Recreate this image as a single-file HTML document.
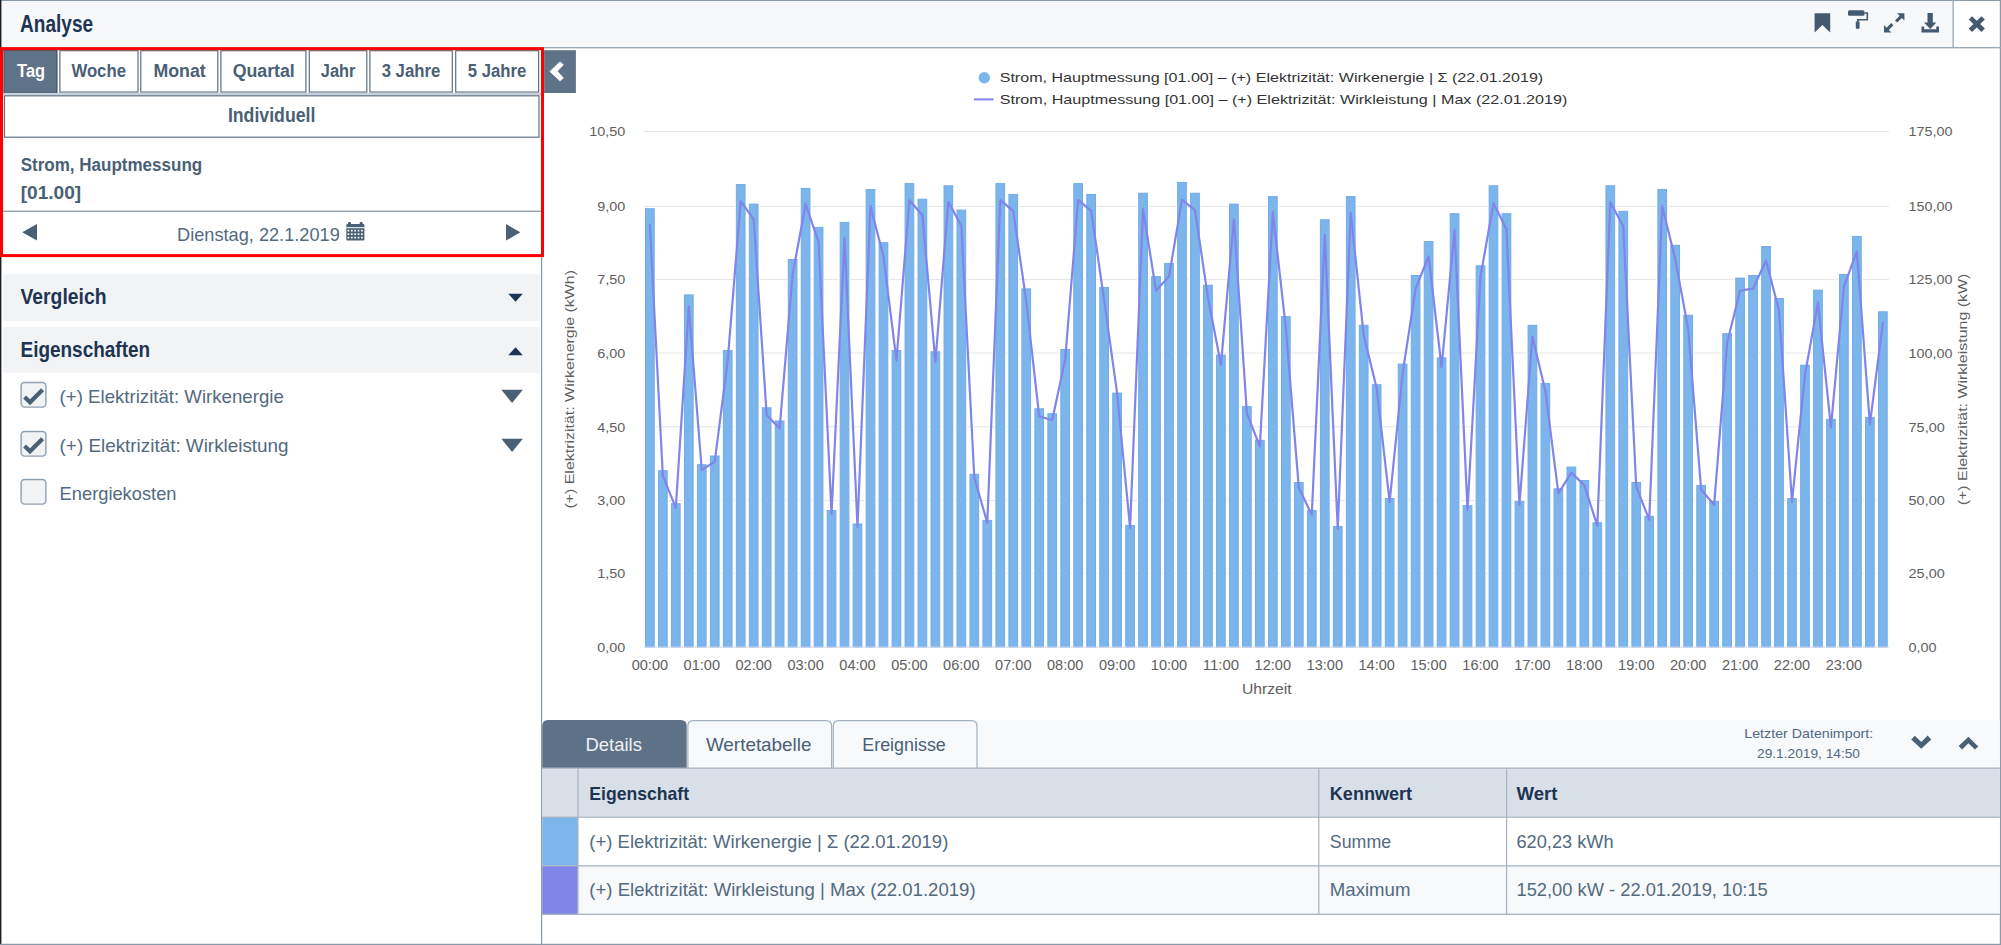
<!DOCTYPE html>
<html><head><meta charset="utf-8"><title>Analyse</title>
<style>html,body{margin:0;padding:0;width:2001px;height:945px;overflow:hidden;background:#fff}
svg{display:block;font-family:"Liberation Sans", sans-serif}</style></head>
<body><svg width="2001" height="945" viewBox="0 0 2001 945">
<rect x="0" y="0" width="2001" height="945" fill="#ffffff"/>
<rect x="1" y="1" width="1952" height="46" fill="#f7f8fa"/>
<rect x="0" y="0" width="2001" height="1" fill="#8a9aaa"/>
<rect x="0" y="47" width="2001" height="1.2" fill="#9aa8b6"/>
<rect x="1952.5" y="0" width="1.3" height="47" fill="#9aa8b6"/>
<text x="20.1" y="31.5" font-size="23.3" font-weight="bold" fill="#1d3553" text-anchor="start" textLength="73.0" lengthAdjust="spacingAndGlyphs">Analyse</text>
<path d="M1814.6 13.2 H1830.2 V32.5 L1822.4 25 L1814.6 32.5 Z" fill="#435a70"/>
<rect x="1848" y="10.3" width="16.5" height="5.5" rx="1.5" fill="#435a70"/>
<path d="M1864.5 13 H1867.3 V19.8 H1857.8 V22" fill="none" stroke="#435a70" stroke-width="1.6"/>
<rect x="1855.8" y="21.5" width="3.8" height="7.2" rx="0.8" fill="#435a70"/>
<path d="M1897 13.2 H1904.4 V20.6 L1901.8 18 L1897.2 22.6 L1895 20.4 L1899.6 15.8 Z" fill="#435a70"/>
<path d="M1884 32.5 V25.1 L1886.6 27.7 L1891.2 23.1 L1893.4 25.3 L1888.8 29.9 L1891.4 32.5 Z" fill="#435a70"/>
<path d="M1927.5 13.1 H1932.8 V22.5 H1936.4 L1930.2 28.9 L1924 22.5 H1927.5 Z" fill="#435a70"/>
<path d="M1921.5 26.6 H1924.2 V29.3 H1936.3 V26.6 H1939 V32.4 H1921.5 Z" fill="#435a70"/>
<path d="M1970.4 17.9 L1983.2 30.3 M1983.2 17.9 L1970.4 30.3" stroke="#435a70" stroke-width="4.8"/>
<rect x="3.9" y="50.2" width="53.1" height="42.4" fill="#5f7388" stroke="#2e4760" stroke-width="1"/>
<text x="17.1" y="77.4" font-size="18.8" font-weight="bold" fill="#ffffff" text-anchor="start" textLength="27.9" lengthAdjust="spacingAndGlyphs">Tag</text>
<rect x="59.9" y="50.7" width="78.1" height="41.4" fill="#ffffff" stroke="#5d7185" stroke-width="1.2"/>
<text x="71.4" y="77.4" font-size="18.8" font-weight="bold" fill="#4a6075" text-anchor="start" textLength="54.6" lengthAdjust="spacingAndGlyphs">Woche</text>
<rect x="140.8" y="50.7" width="77.0" height="41.4" fill="#ffffff" stroke="#5d7185" stroke-width="1.2"/>
<text x="153.5" y="77.4" font-size="18.8" font-weight="bold" fill="#4a6075" text-anchor="start" textLength="52.2" lengthAdjust="spacingAndGlyphs">Monat</text>
<rect x="220.9" y="50.7" width="85.0" height="41.4" fill="#ffffff" stroke="#5d7185" stroke-width="1.2"/>
<text x="232.7" y="77.4" font-size="18.8" font-weight="bold" fill="#4a6075" text-anchor="start" textLength="62.1" lengthAdjust="spacingAndGlyphs">Quartal</text>
<rect x="309.3" y="50.7" width="57.5" height="41.4" fill="#ffffff" stroke="#5d7185" stroke-width="1.2"/>
<text x="320.8" y="77.4" font-size="18.8" font-weight="bold" fill="#4a6075" text-anchor="start" textLength="34.5" lengthAdjust="spacingAndGlyphs">Jahr</text>
<rect x="369.9" y="50.7" width="82.4" height="41.4" fill="#ffffff" stroke="#5d7185" stroke-width="1.2"/>
<text x="381.7" y="77.4" font-size="18.8" font-weight="bold" fill="#4a6075" text-anchor="start" textLength="58.5" lengthAdjust="spacingAndGlyphs">3 Jahre</text>
<rect x="455.7" y="50.7" width="82.9" height="41.4" fill="#ffffff" stroke="#5d7185" stroke-width="1.2"/>
<text x="467.8" y="77.4" font-size="18.8" font-weight="bold" fill="#4a6075" text-anchor="start" textLength="58.4" lengthAdjust="spacingAndGlyphs">5 Jahre</text>
<rect x="3" y="92.8" width="538" height="2.4" fill="#c9d1da"/>
<rect x="4.5" y="95.8" width="534.5" height="41.4" fill="#ffffff" stroke="#5d7185" stroke-width="1.2"/>
<text x="227.9" y="122.3" font-size="19.5" font-weight="bold" fill="#4a6075" text-anchor="start" textLength="87.5" lengthAdjust="spacingAndGlyphs">Individuell</text>
<text x="20.7" y="170.7" font-size="18.3" font-weight="bold" fill="#4a6075" text-anchor="start" textLength="181.5" lengthAdjust="spacingAndGlyphs">Strom, Hauptmessung</text>
<text x="20.7" y="199.2" font-size="18.3" font-weight="bold" fill="#4a6075" text-anchor="start" textLength="60.5" lengthAdjust="spacingAndGlyphs">[01.00]</text>
<rect x="3" y="210.6" width="538" height="1.3" fill="#8a9bab"/>
<path d="M22.2 232.2 L37 224 V240.4 Z" fill="#4a6075"/>
<path d="M506 224 L520.3 232.3 L506 240.6 Z" fill="#4a6075"/>
<text x="177.0" y="240.8" font-size="19" fill="#536a80" text-anchor="start" textLength="162.8" lengthAdjust="spacingAndGlyphs">Dienstag, 22.1.2019</text>
<rect x="346.3" y="224" width="18.1" height="16.6" rx="1" fill="#4a6075"/><rect x="348" y="221.9" width="3" height="3" rx="1" fill="#4a6075"/><rect x="359.7" y="221.9" width="3" height="3" rx="1" fill="#4a6075"/><rect x="346.3" y="227.2" width="18.1" height="1" fill="#ffffff"/><rect x="347.60" y="229.80" width="1.7" height="1.7" fill="#ffffff"/><rect x="350.95" y="229.80" width="1.7" height="1.7" fill="#ffffff"/><rect x="354.30" y="229.80" width="1.7" height="1.7" fill="#ffffff"/><rect x="357.65" y="229.80" width="1.7" height="1.7" fill="#ffffff"/><rect x="361.00" y="229.80" width="1.7" height="1.7" fill="#ffffff"/><rect x="347.60" y="233.30" width="1.7" height="1.7" fill="#ffffff"/><rect x="350.95" y="233.30" width="1.7" height="1.7" fill="#ffffff"/><rect x="354.30" y="233.30" width="1.7" height="1.7" fill="#ffffff"/><rect x="357.65" y="233.30" width="1.7" height="1.7" fill="#ffffff"/><rect x="361.00" y="233.30" width="1.7" height="1.7" fill="#ffffff"/><rect x="347.60" y="236.80" width="1.7" height="1.7" fill="#ffffff"/><rect x="350.95" y="236.80" width="1.7" height="1.7" fill="#ffffff"/><rect x="354.30" y="236.80" width="1.7" height="1.7" fill="#ffffff"/><rect x="357.65" y="236.80" width="1.7" height="1.7" fill="#ffffff"/><rect x="361.00" y="236.80" width="1.7" height="1.7" fill="#ffffff"/>
<rect x="0" y="0" width="1.4" height="945" fill="#1a1f24"/>
<rect x="1999.8" y="0" width="1.2" height="945" fill="#8a9aaa"/>
<rect x="0" y="943.8" width="2001" height="1.2" fill="#8a9aaa"/>
<rect x="1.5" y="48.7" width="541" height="206.9" fill="none" stroke="#ff0000" stroke-width="3"/>
<rect x="3.3" y="274.2" width="537.2" height="46.5" fill="#f1f3f5"/>
<text x="20.5" y="304.0" font-size="21.5" font-weight="bold" fill="#1d3553" text-anchor="start" textLength="86.0" lengthAdjust="spacingAndGlyphs">Vergleich</text>
<path d="M508.3 293.8 H522.8 L515.55 301.7 Z" fill="#1d3553"/>
<rect x="3.3" y="327.1" width="537.2" height="45.6" fill="#f1f3f5"/>
<text x="20.5" y="357.1" font-size="21.5" font-weight="bold" fill="#1d3553" text-anchor="start" textLength="129.6" lengthAdjust="spacingAndGlyphs">Eigenschaften</text>
<path d="M508.3 355.2 H522.8 L515.55 347.2 Z" fill="#1d3553"/>
<rect x="21.1" y="382.5" width="24.8" height="24.6" rx="3.5" fill="#f1f3f5" stroke="#8fa0b1" stroke-width="1.4"/>
<path d="M24.6 397.0 L30 402.2 L42.6 389.7" fill="none" stroke="#4a6075" stroke-width="4.2"/>
<path d="M501.4 389.8 H522.8 L512.1 403.0 Z" fill="#4a6075"/>
<text x="59.6" y="403.4" font-size="19" fill="#536a80" text-anchor="start" textLength="224.2" lengthAdjust="spacingAndGlyphs">(+) Elektrizität: Wirkenergie</text>
<rect x="21.1" y="431.5" width="24.8" height="24.6" rx="3.5" fill="#f1f3f5" stroke="#8fa0b1" stroke-width="1.4"/>
<path d="M24.6 446.0 L30 451.2 L42.6 438.7" fill="none" stroke="#4a6075" stroke-width="4.2"/>
<path d="M501.4 438.8 H522.8 L512.1 452.0 Z" fill="#4a6075"/>
<text x="59.6" y="452.4" font-size="19" fill="#536a80" text-anchor="start" textLength="229.0" lengthAdjust="spacingAndGlyphs">(+) Elektrizität: Wirkleistung</text>
<rect x="21.1" y="479.5" width="24.8" height="24.6" rx="3.5" fill="#f1f3f5" stroke="#8fa0b1" stroke-width="1.4"/>
<text x="59.6" y="500.4" font-size="19" fill="#536a80" text-anchor="start" textLength="116.9" lengthAdjust="spacingAndGlyphs">Energiekosten</text>
<rect x="541" y="257" width="1.2" height="688" fill="#8a9bab"/>
<rect x="544" y="47" width="1457" height="1.2" fill="#9aa8b6"/>
<rect x="544.1" y="50.2" width="31.8" height="42.8" fill="#5f7388"/>
<path d="M549.5 71.5 L560 61.4 L563.8 64.8 L557.6 71.3 L563.8 77.9 L560 81.2 Z" fill="#ffffff"/>
<text x="597.3" y="651.7" font-size="13.6" fill="#606060" text-anchor="start" textLength="28.0" lengthAdjust="spacingAndGlyphs">0,00</text>
<text x="1908.6" y="651.7" font-size="13.6" fill="#606060" text-anchor="start" textLength="28.0" lengthAdjust="spacingAndGlyphs">0,00</text>
<rect x="644" y="573.0" width="1245" height="1" fill="#e6e6e6"/>
<text x="597.3" y="578.2" font-size="13.6" fill="#606060" text-anchor="start" textLength="28.0" lengthAdjust="spacingAndGlyphs">1,50</text>
<text x="1908.6" y="578.2" font-size="13.6" fill="#606060" text-anchor="start" textLength="36.1" lengthAdjust="spacingAndGlyphs">25,00</text>
<rect x="644" y="500.0" width="1245" height="1" fill="#e6e6e6"/>
<text x="597.3" y="505.2" font-size="13.6" fill="#606060" text-anchor="start" textLength="28.0" lengthAdjust="spacingAndGlyphs">3,00</text>
<text x="1908.6" y="505.2" font-size="13.6" fill="#606060" text-anchor="start" textLength="36.1" lengthAdjust="spacingAndGlyphs">50,00</text>
<rect x="644" y="426.3" width="1245" height="1" fill="#e6e6e6"/>
<text x="597.3" y="431.5" font-size="13.6" fill="#606060" text-anchor="start" textLength="28.0" lengthAdjust="spacingAndGlyphs">4,50</text>
<text x="1908.6" y="431.5" font-size="13.6" fill="#606060" text-anchor="start" textLength="36.1" lengthAdjust="spacingAndGlyphs">75,00</text>
<rect x="644" y="352.5" width="1245" height="1" fill="#e6e6e6"/>
<text x="597.3" y="357.7" font-size="13.6" fill="#606060" text-anchor="start" textLength="28.0" lengthAdjust="spacingAndGlyphs">6,00</text>
<text x="1908.6" y="357.7" font-size="13.6" fill="#606060" text-anchor="start" textLength="43.8" lengthAdjust="spacingAndGlyphs">100,00</text>
<rect x="644" y="278.9" width="1245" height="1" fill="#e6e6e6"/>
<text x="597.3" y="284.1" font-size="13.6" fill="#606060" text-anchor="start" textLength="28.0" lengthAdjust="spacingAndGlyphs">7,50</text>
<text x="1908.6" y="284.1" font-size="13.6" fill="#606060" text-anchor="start" textLength="43.8" lengthAdjust="spacingAndGlyphs">125,00</text>
<rect x="644" y="206.0" width="1245" height="1" fill="#e6e6e6"/>
<text x="597.3" y="211.2" font-size="13.6" fill="#606060" text-anchor="start" textLength="28.0" lengthAdjust="spacingAndGlyphs">9,00</text>
<text x="1908.6" y="211.2" font-size="13.6" fill="#606060" text-anchor="start" textLength="43.8" lengthAdjust="spacingAndGlyphs">150,00</text>
<rect x="644" y="131.0" width="1245" height="1" fill="#e6e6e6"/>
<text x="589.2" y="136.2" font-size="13.6" fill="#606060" text-anchor="start" textLength="36.1" lengthAdjust="spacingAndGlyphs">10,50</text>
<text x="1908.6" y="136.2" font-size="13.6" fill="#606060" text-anchor="start" textLength="43.8" lengthAdjust="spacingAndGlyphs">175,00</text>
<rect x="644.00" y="207.2" width="11.7" height="439.8" fill="#ffffff"/>
<rect x="645.50" y="208.7" width="8.7" height="438.3" fill="#7cb5ec" stroke="#71ace7" stroke-width="1"/>
<rect x="656.98" y="469.2" width="11.7" height="177.8" fill="#ffffff"/>
<rect x="658.48" y="470.7" width="8.7" height="176.3" fill="#7cb5ec" stroke="#71ace7" stroke-width="1"/>
<rect x="669.96" y="502.2" width="11.7" height="144.8" fill="#ffffff"/>
<rect x="671.46" y="503.7" width="8.7" height="143.3" fill="#7cb5ec" stroke="#71ace7" stroke-width="1"/>
<rect x="682.94" y="293.4" width="11.7" height="353.6" fill="#ffffff"/>
<rect x="684.44" y="294.9" width="8.7" height="352.1" fill="#7cb5ec" stroke="#71ace7" stroke-width="1"/>
<rect x="695.92" y="463.2" width="11.7" height="183.8" fill="#ffffff"/>
<rect x="697.42" y="464.7" width="8.7" height="182.3" fill="#7cb5ec" stroke="#71ace7" stroke-width="1"/>
<rect x="708.89" y="454.5" width="11.7" height="192.5" fill="#ffffff"/>
<rect x="710.39" y="456.0" width="8.7" height="191.0" fill="#7cb5ec" stroke="#71ace7" stroke-width="1"/>
<rect x="721.87" y="349.0" width="11.7" height="298.0" fill="#ffffff"/>
<rect x="723.37" y="350.5" width="8.7" height="296.5" fill="#7cb5ec" stroke="#71ace7" stroke-width="1"/>
<rect x="734.85" y="183.1" width="11.7" height="463.9" fill="#ffffff"/>
<rect x="736.35" y="184.6" width="8.7" height="462.4" fill="#7cb5ec" stroke="#71ace7" stroke-width="1"/>
<rect x="747.83" y="202.6" width="11.7" height="444.4" fill="#ffffff"/>
<rect x="749.33" y="204.1" width="8.7" height="442.9" fill="#7cb5ec" stroke="#71ace7" stroke-width="1"/>
<rect x="760.81" y="406.3" width="11.7" height="240.7" fill="#ffffff"/>
<rect x="762.31" y="407.8" width="8.7" height="239.2" fill="#7cb5ec" stroke="#71ace7" stroke-width="1"/>
<rect x="773.79" y="419.5" width="11.7" height="227.5" fill="#ffffff"/>
<rect x="775.29" y="421.0" width="8.7" height="226.0" fill="#7cb5ec" stroke="#71ace7" stroke-width="1"/>
<rect x="786.77" y="258.0" width="11.7" height="389.0" fill="#ffffff"/>
<rect x="788.27" y="259.5" width="8.7" height="387.5" fill="#7cb5ec" stroke="#71ace7" stroke-width="1"/>
<rect x="799.75" y="186.9" width="11.7" height="460.1" fill="#ffffff"/>
<rect x="801.25" y="188.4" width="8.7" height="458.6" fill="#7cb5ec" stroke="#71ace7" stroke-width="1"/>
<rect x="812.73" y="225.9" width="11.7" height="421.1" fill="#ffffff"/>
<rect x="814.23" y="227.4" width="8.7" height="419.6" fill="#7cb5ec" stroke="#71ace7" stroke-width="1"/>
<rect x="825.71" y="509.0" width="11.7" height="138.0" fill="#ffffff"/>
<rect x="827.21" y="510.5" width="8.7" height="136.5" fill="#7cb5ec" stroke="#71ace7" stroke-width="1"/>
<rect x="838.68" y="220.9" width="11.7" height="426.1" fill="#ffffff"/>
<rect x="840.18" y="222.4" width="8.7" height="424.6" fill="#7cb5ec" stroke="#71ace7" stroke-width="1"/>
<rect x="851.66" y="522.5" width="11.7" height="124.5" fill="#ffffff"/>
<rect x="853.16" y="524.0" width="8.7" height="123.0" fill="#7cb5ec" stroke="#71ace7" stroke-width="1"/>
<rect x="864.64" y="188.1" width="11.7" height="458.9" fill="#ffffff"/>
<rect x="866.14" y="189.6" width="8.7" height="457.4" fill="#7cb5ec" stroke="#71ace7" stroke-width="1"/>
<rect x="877.62" y="241.2" width="11.7" height="405.8" fill="#ffffff"/>
<rect x="879.12" y="242.7" width="8.7" height="404.3" fill="#7cb5ec" stroke="#71ace7" stroke-width="1"/>
<rect x="890.60" y="349.0" width="11.7" height="298.0" fill="#ffffff"/>
<rect x="892.10" y="350.5" width="8.7" height="296.5" fill="#7cb5ec" stroke="#71ace7" stroke-width="1"/>
<rect x="903.58" y="182.1" width="11.7" height="464.9" fill="#ffffff"/>
<rect x="905.08" y="183.6" width="8.7" height="463.4" fill="#7cb5ec" stroke="#71ace7" stroke-width="1"/>
<rect x="916.56" y="197.7" width="11.7" height="449.3" fill="#ffffff"/>
<rect x="918.06" y="199.2" width="8.7" height="447.8" fill="#7cb5ec" stroke="#71ace7" stroke-width="1"/>
<rect x="929.54" y="350.3" width="11.7" height="296.7" fill="#ffffff"/>
<rect x="931.04" y="351.8" width="8.7" height="295.2" fill="#7cb5ec" stroke="#71ace7" stroke-width="1"/>
<rect x="942.52" y="184.3" width="11.7" height="462.7" fill="#ffffff"/>
<rect x="944.02" y="185.8" width="8.7" height="461.2" fill="#7cb5ec" stroke="#71ace7" stroke-width="1"/>
<rect x="955.50" y="208.6" width="11.7" height="438.4" fill="#ffffff"/>
<rect x="957.00" y="210.1" width="8.7" height="436.9" fill="#7cb5ec" stroke="#71ace7" stroke-width="1"/>
<rect x="968.47" y="472.8" width="11.7" height="174.2" fill="#ffffff"/>
<rect x="969.97" y="474.3" width="8.7" height="172.7" fill="#7cb5ec" stroke="#71ace7" stroke-width="1"/>
<rect x="981.45" y="518.9" width="11.7" height="128.1" fill="#ffffff"/>
<rect x="982.95" y="520.4" width="8.7" height="126.6" fill="#7cb5ec" stroke="#71ace7" stroke-width="1"/>
<rect x="994.43" y="182.1" width="11.7" height="464.9" fill="#ffffff"/>
<rect x="995.93" y="183.6" width="8.7" height="463.4" fill="#7cb5ec" stroke="#71ace7" stroke-width="1"/>
<rect x="1007.41" y="192.9" width="11.7" height="454.1" fill="#ffffff"/>
<rect x="1008.91" y="194.4" width="8.7" height="452.6" fill="#7cb5ec" stroke="#71ace7" stroke-width="1"/>
<rect x="1020.39" y="287.4" width="11.7" height="359.6" fill="#ffffff"/>
<rect x="1021.89" y="288.9" width="8.7" height="358.1" fill="#7cb5ec" stroke="#71ace7" stroke-width="1"/>
<rect x="1033.37" y="407.3" width="11.7" height="239.7" fill="#ffffff"/>
<rect x="1034.87" y="408.8" width="8.7" height="238.2" fill="#7cb5ec" stroke="#71ace7" stroke-width="1"/>
<rect x="1046.35" y="412.3" width="11.7" height="234.7" fill="#ffffff"/>
<rect x="1047.85" y="413.8" width="8.7" height="233.2" fill="#7cb5ec" stroke="#71ace7" stroke-width="1"/>
<rect x="1059.33" y="348.0" width="11.7" height="299.0" fill="#ffffff"/>
<rect x="1060.83" y="349.5" width="8.7" height="297.5" fill="#7cb5ec" stroke="#71ace7" stroke-width="1"/>
<rect x="1072.31" y="182.1" width="11.7" height="464.9" fill="#ffffff"/>
<rect x="1073.81" y="183.6" width="8.7" height="463.4" fill="#7cb5ec" stroke="#71ace7" stroke-width="1"/>
<rect x="1085.29" y="192.9" width="11.7" height="454.1" fill="#ffffff"/>
<rect x="1086.79" y="194.4" width="8.7" height="452.6" fill="#7cb5ec" stroke="#71ace7" stroke-width="1"/>
<rect x="1098.26" y="286.0" width="11.7" height="361.0" fill="#ffffff"/>
<rect x="1099.76" y="287.5" width="8.7" height="359.5" fill="#7cb5ec" stroke="#71ace7" stroke-width="1"/>
<rect x="1111.24" y="391.6" width="11.7" height="255.4" fill="#ffffff"/>
<rect x="1112.74" y="393.1" width="8.7" height="253.9" fill="#7cb5ec" stroke="#71ace7" stroke-width="1"/>
<rect x="1124.22" y="523.9" width="11.7" height="123.1" fill="#ffffff"/>
<rect x="1125.72" y="525.4" width="8.7" height="121.6" fill="#7cb5ec" stroke="#71ace7" stroke-width="1"/>
<rect x="1137.20" y="191.7" width="11.7" height="455.3" fill="#ffffff"/>
<rect x="1138.70" y="193.2" width="8.7" height="453.8" fill="#7cb5ec" stroke="#71ace7" stroke-width="1"/>
<rect x="1150.18" y="275.2" width="11.7" height="371.8" fill="#ffffff"/>
<rect x="1151.68" y="276.7" width="8.7" height="370.3" fill="#7cb5ec" stroke="#71ace7" stroke-width="1"/>
<rect x="1163.16" y="261.9" width="11.7" height="385.1" fill="#ffffff"/>
<rect x="1164.66" y="263.4" width="8.7" height="383.6" fill="#7cb5ec" stroke="#71ace7" stroke-width="1"/>
<rect x="1176.14" y="180.9" width="11.7" height="466.1" fill="#ffffff"/>
<rect x="1177.64" y="182.4" width="8.7" height="464.6" fill="#7cb5ec" stroke="#71ace7" stroke-width="1"/>
<rect x="1189.12" y="191.7" width="11.7" height="455.3" fill="#ffffff"/>
<rect x="1190.62" y="193.2" width="8.7" height="453.8" fill="#7cb5ec" stroke="#71ace7" stroke-width="1"/>
<rect x="1202.10" y="283.8" width="11.7" height="363.2" fill="#ffffff"/>
<rect x="1203.60" y="285.3" width="8.7" height="361.7" fill="#7cb5ec" stroke="#71ace7" stroke-width="1"/>
<rect x="1215.08" y="353.6" width="11.7" height="293.4" fill="#ffffff"/>
<rect x="1216.58" y="355.1" width="8.7" height="291.9" fill="#7cb5ec" stroke="#71ace7" stroke-width="1"/>
<rect x="1228.05" y="202.6" width="11.7" height="444.4" fill="#ffffff"/>
<rect x="1229.55" y="204.1" width="8.7" height="442.9" fill="#7cb5ec" stroke="#71ace7" stroke-width="1"/>
<rect x="1241.03" y="405.1" width="11.7" height="241.9" fill="#ffffff"/>
<rect x="1242.53" y="406.6" width="8.7" height="240.4" fill="#7cb5ec" stroke="#71ace7" stroke-width="1"/>
<rect x="1254.01" y="438.8" width="11.7" height="208.2" fill="#ffffff"/>
<rect x="1255.51" y="440.3" width="8.7" height="206.7" fill="#7cb5ec" stroke="#71ace7" stroke-width="1"/>
<rect x="1266.99" y="195.1" width="11.7" height="451.9" fill="#ffffff"/>
<rect x="1268.49" y="196.6" width="8.7" height="450.4" fill="#7cb5ec" stroke="#71ace7" stroke-width="1"/>
<rect x="1279.97" y="315.2" width="11.7" height="331.8" fill="#ffffff"/>
<rect x="1281.47" y="316.7" width="8.7" height="330.3" fill="#7cb5ec" stroke="#71ace7" stroke-width="1"/>
<rect x="1292.95" y="481.0" width="11.7" height="166.0" fill="#ffffff"/>
<rect x="1294.45" y="482.5" width="8.7" height="164.5" fill="#7cb5ec" stroke="#71ace7" stroke-width="1"/>
<rect x="1305.93" y="509.0" width="11.7" height="138.0" fill="#ffffff"/>
<rect x="1307.43" y="510.5" width="8.7" height="136.5" fill="#7cb5ec" stroke="#71ace7" stroke-width="1"/>
<rect x="1318.91" y="218.3" width="11.7" height="428.7" fill="#ffffff"/>
<rect x="1320.41" y="219.8" width="8.7" height="427.2" fill="#7cb5ec" stroke="#71ace7" stroke-width="1"/>
<rect x="1331.89" y="524.9" width="11.7" height="122.1" fill="#ffffff"/>
<rect x="1333.39" y="526.4" width="8.7" height="120.6" fill="#7cb5ec" stroke="#71ace7" stroke-width="1"/>
<rect x="1344.87" y="195.1" width="11.7" height="451.9" fill="#ffffff"/>
<rect x="1346.37" y="196.6" width="8.7" height="450.4" fill="#7cb5ec" stroke="#71ace7" stroke-width="1"/>
<rect x="1357.84" y="323.8" width="11.7" height="323.2" fill="#ffffff"/>
<rect x="1359.34" y="325.3" width="8.7" height="321.7" fill="#7cb5ec" stroke="#71ace7" stroke-width="1"/>
<rect x="1370.82" y="383.2" width="11.7" height="263.8" fill="#ffffff"/>
<rect x="1372.32" y="384.7" width="8.7" height="262.3" fill="#7cb5ec" stroke="#71ace7" stroke-width="1"/>
<rect x="1383.80" y="497.0" width="11.7" height="150.0" fill="#ffffff"/>
<rect x="1385.30" y="498.5" width="8.7" height="148.5" fill="#7cb5ec" stroke="#71ace7" stroke-width="1"/>
<rect x="1396.78" y="362.6" width="11.7" height="284.4" fill="#ffffff"/>
<rect x="1398.28" y="364.1" width="8.7" height="282.9" fill="#7cb5ec" stroke="#71ace7" stroke-width="1"/>
<rect x="1409.76" y="274.0" width="11.7" height="373.0" fill="#ffffff"/>
<rect x="1411.26" y="275.5" width="8.7" height="371.5" fill="#7cb5ec" stroke="#71ace7" stroke-width="1"/>
<rect x="1422.74" y="240.0" width="11.7" height="407.0" fill="#ffffff"/>
<rect x="1424.24" y="241.5" width="8.7" height="405.5" fill="#7cb5ec" stroke="#71ace7" stroke-width="1"/>
<rect x="1435.72" y="356.4" width="11.7" height="290.6" fill="#ffffff"/>
<rect x="1437.22" y="357.9" width="8.7" height="289.1" fill="#7cb5ec" stroke="#71ace7" stroke-width="1"/>
<rect x="1448.70" y="212.2" width="11.7" height="434.8" fill="#ffffff"/>
<rect x="1450.20" y="213.7" width="8.7" height="433.3" fill="#7cb5ec" stroke="#71ace7" stroke-width="1"/>
<rect x="1461.68" y="504.2" width="11.7" height="142.8" fill="#ffffff"/>
<rect x="1463.18" y="505.7" width="8.7" height="141.3" fill="#7cb5ec" stroke="#71ace7" stroke-width="1"/>
<rect x="1474.66" y="264.3" width="11.7" height="382.7" fill="#ffffff"/>
<rect x="1476.16" y="265.8" width="8.7" height="381.2" fill="#7cb5ec" stroke="#71ace7" stroke-width="1"/>
<rect x="1487.63" y="184.3" width="11.7" height="462.7" fill="#ffffff"/>
<rect x="1489.13" y="185.8" width="8.7" height="461.2" fill="#7cb5ec" stroke="#71ace7" stroke-width="1"/>
<rect x="1500.61" y="212.2" width="11.7" height="434.8" fill="#ffffff"/>
<rect x="1502.11" y="213.7" width="8.7" height="433.3" fill="#7cb5ec" stroke="#71ace7" stroke-width="1"/>
<rect x="1513.59" y="499.8" width="11.7" height="147.2" fill="#ffffff"/>
<rect x="1515.09" y="501.3" width="8.7" height="145.7" fill="#7cb5ec" stroke="#71ace7" stroke-width="1"/>
<rect x="1526.57" y="323.8" width="11.7" height="323.2" fill="#ffffff"/>
<rect x="1528.07" y="325.3" width="8.7" height="321.7" fill="#7cb5ec" stroke="#71ace7" stroke-width="1"/>
<rect x="1539.55" y="382.1" width="11.7" height="264.9" fill="#ffffff"/>
<rect x="1541.05" y="383.6" width="8.7" height="263.4" fill="#7cb5ec" stroke="#71ace7" stroke-width="1"/>
<rect x="1552.53" y="487.3" width="11.7" height="159.7" fill="#ffffff"/>
<rect x="1554.03" y="488.8" width="8.7" height="158.2" fill="#7cb5ec" stroke="#71ace7" stroke-width="1"/>
<rect x="1565.51" y="465.6" width="11.7" height="181.4" fill="#ffffff"/>
<rect x="1567.01" y="467.1" width="8.7" height="179.9" fill="#7cb5ec" stroke="#71ace7" stroke-width="1"/>
<rect x="1578.49" y="479.0" width="11.7" height="168.0" fill="#ffffff"/>
<rect x="1579.99" y="480.5" width="8.7" height="166.5" fill="#7cb5ec" stroke="#71ace7" stroke-width="1"/>
<rect x="1591.47" y="521.3" width="11.7" height="125.7" fill="#ffffff"/>
<rect x="1592.97" y="522.8" width="8.7" height="124.2" fill="#7cb5ec" stroke="#71ace7" stroke-width="1"/>
<rect x="1604.45" y="184.3" width="11.7" height="462.7" fill="#ffffff"/>
<rect x="1605.95" y="185.8" width="8.7" height="461.2" fill="#7cb5ec" stroke="#71ace7" stroke-width="1"/>
<rect x="1617.42" y="209.8" width="11.7" height="437.2" fill="#ffffff"/>
<rect x="1618.92" y="211.3" width="8.7" height="435.7" fill="#7cb5ec" stroke="#71ace7" stroke-width="1"/>
<rect x="1630.40" y="481.0" width="11.7" height="166.0" fill="#ffffff"/>
<rect x="1631.90" y="482.5" width="8.7" height="164.5" fill="#7cb5ec" stroke="#71ace7" stroke-width="1"/>
<rect x="1643.38" y="514.8" width="11.7" height="132.2" fill="#ffffff"/>
<rect x="1644.88" y="516.3" width="8.7" height="130.7" fill="#7cb5ec" stroke="#71ace7" stroke-width="1"/>
<rect x="1656.36" y="188.1" width="11.7" height="458.9" fill="#ffffff"/>
<rect x="1657.86" y="189.6" width="8.7" height="457.4" fill="#7cb5ec" stroke="#71ace7" stroke-width="1"/>
<rect x="1669.34" y="243.8" width="11.7" height="403.2" fill="#ffffff"/>
<rect x="1670.84" y="245.3" width="8.7" height="401.7" fill="#7cb5ec" stroke="#71ace7" stroke-width="1"/>
<rect x="1682.32" y="313.8" width="11.7" height="333.2" fill="#ffffff"/>
<rect x="1683.82" y="315.3" width="8.7" height="331.7" fill="#7cb5ec" stroke="#71ace7" stroke-width="1"/>
<rect x="1695.30" y="483.9" width="11.7" height="163.1" fill="#ffffff"/>
<rect x="1696.80" y="485.4" width="8.7" height="161.6" fill="#7cb5ec" stroke="#71ace7" stroke-width="1"/>
<rect x="1708.28" y="499.8" width="11.7" height="147.2" fill="#ffffff"/>
<rect x="1709.78" y="501.3" width="8.7" height="145.7" fill="#7cb5ec" stroke="#71ace7" stroke-width="1"/>
<rect x="1721.26" y="332.2" width="11.7" height="314.8" fill="#ffffff"/>
<rect x="1722.76" y="333.7" width="8.7" height="313.3" fill="#7cb5ec" stroke="#71ace7" stroke-width="1"/>
<rect x="1734.24" y="276.6" width="11.7" height="370.4" fill="#ffffff"/>
<rect x="1735.74" y="278.1" width="8.7" height="368.9" fill="#7cb5ec" stroke="#71ace7" stroke-width="1"/>
<rect x="1747.21" y="274.0" width="11.7" height="373.0" fill="#ffffff"/>
<rect x="1748.71" y="275.5" width="8.7" height="371.5" fill="#7cb5ec" stroke="#71ace7" stroke-width="1"/>
<rect x="1760.19" y="245.0" width="11.7" height="402.0" fill="#ffffff"/>
<rect x="1761.69" y="246.5" width="8.7" height="400.5" fill="#7cb5ec" stroke="#71ace7" stroke-width="1"/>
<rect x="1773.17" y="297.0" width="11.7" height="350.0" fill="#ffffff"/>
<rect x="1774.67" y="298.5" width="8.7" height="348.5" fill="#7cb5ec" stroke="#71ace7" stroke-width="1"/>
<rect x="1786.15" y="497.1" width="11.7" height="149.9" fill="#ffffff"/>
<rect x="1787.65" y="498.6" width="8.7" height="148.4" fill="#7cb5ec" stroke="#71ace7" stroke-width="1"/>
<rect x="1799.13" y="363.7" width="11.7" height="283.3" fill="#ffffff"/>
<rect x="1800.63" y="365.2" width="8.7" height="281.8" fill="#7cb5ec" stroke="#71ace7" stroke-width="1"/>
<rect x="1812.11" y="288.6" width="11.7" height="358.4" fill="#ffffff"/>
<rect x="1813.61" y="290.1" width="8.7" height="356.9" fill="#7cb5ec" stroke="#71ace7" stroke-width="1"/>
<rect x="1825.09" y="417.9" width="11.7" height="229.1" fill="#ffffff"/>
<rect x="1826.59" y="419.4" width="8.7" height="227.6" fill="#7cb5ec" stroke="#71ace7" stroke-width="1"/>
<rect x="1838.07" y="272.9" width="11.7" height="374.1" fill="#ffffff"/>
<rect x="1839.57" y="274.4" width="8.7" height="372.6" fill="#7cb5ec" stroke="#71ace7" stroke-width="1"/>
<rect x="1851.05" y="234.9" width="11.7" height="412.1" fill="#ffffff"/>
<rect x="1852.55" y="236.4" width="8.7" height="410.6" fill="#7cb5ec" stroke="#71ace7" stroke-width="1"/>
<rect x="1864.03" y="415.9" width="11.7" height="231.1" fill="#ffffff"/>
<rect x="1865.53" y="417.4" width="8.7" height="229.6" fill="#7cb5ec" stroke="#71ace7" stroke-width="1"/>
<rect x="1877.00" y="310.3" width="11.7" height="336.7" fill="#ffffff"/>
<rect x="1878.50" y="311.8" width="8.7" height="335.2" fill="#7cb5ec" stroke="#71ace7" stroke-width="1"/>
<rect x="644" y="646.5" width="1245" height="1" fill="#ccd6eb"/>
<polyline points="649.85,224.7 662.83,475.6 675.81,507.8 688.79,306.7 701.77,470.0 714.75,461.6 727.72,360.4 740.70,201.2 753.68,219.3 766.66,414.9 779.64,428.4 792.62,274.5 805.60,204.2 818.58,242.0 831.56,513.8 844.53,238.0 857.51,526.9 870.49,206.2 883.47,256.4 896.45,360.4 909.43,200.2 922.41,215.2 935.39,361.6 948.37,201.8 961.35,225.9 974.32,477.6 987.30,522.9 1000.28,199.8 1013.26,211.2 1026.24,301.0 1039.22,416.3 1052.20,420.3 1065.18,359.4 1078.16,199.8 1091.14,210.8 1104.11,299.6 1117.09,393.2 1130.07,527.9 1143.05,209.2 1156.03,290.6 1169.01,276.6 1181.99,199.8 1194.97,210.2 1207.95,297.5 1220.93,364.8 1233.90,219.3 1246.88,413.3 1259.86,446.5 1272.84,212.2 1285.82,327.8 1298.80,487.7 1311.78,514.8 1324.76,234.9 1337.74,528.9 1350.72,212.8 1363.69,334.9 1376.67,388.2 1389.65,501.8 1402.63,373.5 1415.61,288.6 1428.59,256.5 1441.57,367.0 1454.55,229.7 1467.53,509.8 1480.51,276.6 1493.48,203.2 1506.46,229.3 1519.44,504.8 1532.42,336.5 1545.40,391.2 1558.38,493.3 1571.36,472.6 1584.34,485.3 1597.32,525.9 1610.30,202.2 1623.27,226.3 1636.25,486.7 1649.23,519.9 1662.21,206.2 1675.19,258.9 1688.17,328.8 1701.15,489.7 1714.13,504.8 1727.11,342.9 1740.09,290.6 1753.06,288.6 1766.04,260.5 1779.02,310.7 1792.00,501.8 1804.98,374.6 1817.96,302.7 1830.94,427.4 1843.92,286.6 1856.90,251.4 1869.88,424.3 1882.85,322.8" fill="none" stroke="#8085e9" stroke-width="2.2" stroke-linejoin="round" stroke-linecap="round"/>
<text x="649.9" y="670.0" font-size="14.4" fill="#606060" text-anchor="middle" textLength="36.4" lengthAdjust="spacingAndGlyphs">00:00</text>
<text x="701.8" y="670.0" font-size="14.4" fill="#606060" text-anchor="middle" textLength="36.4" lengthAdjust="spacingAndGlyphs">01:00</text>
<text x="753.7" y="670.0" font-size="14.4" fill="#606060" text-anchor="middle" textLength="36.4" lengthAdjust="spacingAndGlyphs">02:00</text>
<text x="805.6" y="670.0" font-size="14.4" fill="#606060" text-anchor="middle" textLength="36.4" lengthAdjust="spacingAndGlyphs">03:00</text>
<text x="857.5" y="670.0" font-size="14.4" fill="#606060" text-anchor="middle" textLength="36.4" lengthAdjust="spacingAndGlyphs">04:00</text>
<text x="909.4" y="670.0" font-size="14.4" fill="#606060" text-anchor="middle" textLength="36.4" lengthAdjust="spacingAndGlyphs">05:00</text>
<text x="961.3" y="670.0" font-size="14.4" fill="#606060" text-anchor="middle" textLength="36.4" lengthAdjust="spacingAndGlyphs">06:00</text>
<text x="1013.3" y="670.0" font-size="14.4" fill="#606060" text-anchor="middle" textLength="36.4" lengthAdjust="spacingAndGlyphs">07:00</text>
<text x="1065.2" y="670.0" font-size="14.4" fill="#606060" text-anchor="middle" textLength="36.4" lengthAdjust="spacingAndGlyphs">08:00</text>
<text x="1117.1" y="670.0" font-size="14.4" fill="#606060" text-anchor="middle" textLength="36.4" lengthAdjust="spacingAndGlyphs">09:00</text>
<text x="1169.0" y="670.0" font-size="14.4" fill="#606060" text-anchor="middle" textLength="36.4" lengthAdjust="spacingAndGlyphs">10:00</text>
<text x="1220.9" y="670.0" font-size="14.4" fill="#606060" text-anchor="middle" textLength="36.4" lengthAdjust="spacingAndGlyphs">11:00</text>
<text x="1272.8" y="670.0" font-size="14.4" fill="#606060" text-anchor="middle" textLength="36.4" lengthAdjust="spacingAndGlyphs">12:00</text>
<text x="1324.8" y="670.0" font-size="14.4" fill="#606060" text-anchor="middle" textLength="36.4" lengthAdjust="spacingAndGlyphs">13:00</text>
<text x="1376.7" y="670.0" font-size="14.4" fill="#606060" text-anchor="middle" textLength="36.4" lengthAdjust="spacingAndGlyphs">14:00</text>
<text x="1428.6" y="670.0" font-size="14.4" fill="#606060" text-anchor="middle" textLength="36.4" lengthAdjust="spacingAndGlyphs">15:00</text>
<text x="1480.5" y="670.0" font-size="14.4" fill="#606060" text-anchor="middle" textLength="36.4" lengthAdjust="spacingAndGlyphs">16:00</text>
<text x="1532.4" y="670.0" font-size="14.4" fill="#606060" text-anchor="middle" textLength="36.4" lengthAdjust="spacingAndGlyphs">17:00</text>
<text x="1584.3" y="670.0" font-size="14.4" fill="#606060" text-anchor="middle" textLength="36.4" lengthAdjust="spacingAndGlyphs">18:00</text>
<text x="1636.3" y="670.0" font-size="14.4" fill="#606060" text-anchor="middle" textLength="36.4" lengthAdjust="spacingAndGlyphs">19:00</text>
<text x="1688.2" y="670.0" font-size="14.4" fill="#606060" text-anchor="middle" textLength="36.4" lengthAdjust="spacingAndGlyphs">20:00</text>
<text x="1740.1" y="670.0" font-size="14.4" fill="#606060" text-anchor="middle" textLength="36.4" lengthAdjust="spacingAndGlyphs">21:00</text>
<text x="1792.0" y="670.0" font-size="14.4" fill="#606060" text-anchor="middle" textLength="36.4" lengthAdjust="spacingAndGlyphs">22:00</text>
<text x="1843.9" y="670.0" font-size="14.4" fill="#606060" text-anchor="middle" textLength="36.4" lengthAdjust="spacingAndGlyphs">23:00</text>
<text x="1266.8" y="694.0" font-size="14.6" fill="#606060" text-anchor="middle" textLength="49.6" lengthAdjust="spacingAndGlyphs">Uhrzeit</text>
<g transform="translate(574,389.3) rotate(-90)"><text x="0.0" y="0.0" font-size="13.6" fill="#606060" text-anchor="middle" textLength="238.6" lengthAdjust="spacingAndGlyphs">(+) Elektrizität: Wirkenergie (kWh)</text></g>
<g transform="translate(1967.2,389.5) rotate(-90)"><text x="0.0" y="0.0" font-size="13.6" fill="#606060" text-anchor="middle" textLength="231.7" lengthAdjust="spacingAndGlyphs">(+) Elektrizität: Wirkleistung (kW)</text></g>
<circle cx="984.3" cy="77.7" r="5.7" fill="#7cb5ec"/>
<text x="999.7" y="81.8" font-size="13.6" fill="#333333" text-anchor="start" textLength="543.5" lengthAdjust="spacingAndGlyphs">Strom, Hauptmessung [01.00] – (+) Elektrizität: Wirkenergie | Σ (22.01.2019)</text>
<rect x="974" y="98.4" width="19.5" height="2" fill="#8085e9"/>
<text x="999.7" y="104.0" font-size="13.6" fill="#333333" text-anchor="start" textLength="567.7" lengthAdjust="spacingAndGlyphs">Strom, Hauptmessung [01.00] – (+) Elektrizität: Wirkleistung | Max (22.01.2019)</text>
<rect x="542.2" y="720" width="1457.6" height="48" fill="#f7f9fb"/>
<path d="M542.2 768 V726 Q542.2 720 548 720 H680.7 Q686.7 720 686.7 726 V768 Z" fill="#5d7187"/>
<text x="585.4" y="751.0" font-size="19" fill="#eef2f6" text-anchor="start" textLength="56.5" lengthAdjust="spacingAndGlyphs">Details</text>
<path d="M687.9 768 V726 Q687.9 720.6 693.3 720.6 H826.2 Q831.6 720.6 831.6 726 V768" fill="#f7f9fb" stroke="#a3b1bf" stroke-width="1.2"/>
<text x="705.9" y="751.0" font-size="19" fill="#4a6075" text-anchor="start" textLength="105.6" lengthAdjust="spacingAndGlyphs">Wertetabelle</text>
<path d="M833.3 768 V726 Q833.3 720.6 838.7 720.6 H971.6 Q977.0 720.6 977.0 726 V768" fill="#f7f9fb" stroke="#a3b1bf" stroke-width="1.2"/>
<text x="862.3" y="751.0" font-size="19" fill="#4a6075" text-anchor="start" textLength="83.5" lengthAdjust="spacingAndGlyphs">Ereignisse</text>
<text x="1744.3" y="737.9" font-size="13.6" fill="#536a80" text-anchor="start" textLength="128.9" lengthAdjust="spacingAndGlyphs">Letzter Datenimport:</text>
<text x="1757.0" y="758.3" font-size="13.6" fill="#536a80" text-anchor="start" textLength="103.0" lengthAdjust="spacingAndGlyphs">29.1.2019, 14:50</text>
<path d="M1911.2 739.4 L1914.8 735.8 L1921.3 742.1 L1927.6 735.6 L1931.3 739.4 L1921.2 748.8 Z" fill="#4a6075"/>
<path d="M1958.7 746.1 L1968.4 736.7 L1978.3 746.4 L1974.9 749.6 L1968.4 743.3 L1962.1 749.6 Z" fill="#4a6075"/>
<rect x="542.2" y="768" width="1457.6" height="48.7" fill="#d9dfe6"/>
<rect x="542.2" y="817.2" width="1457.6" height="48" fill="#ffffff"/>
<rect x="542.2" y="865.8" width="1457.6" height="48.4" fill="#f7f9fb"/>
<rect x="542.2" y="817.2" width="35.6" height="48" fill="#7cb5ec"/>
<rect x="542.2" y="865.8" width="35.6" height="48.4" fill="#8085e9"/>
<rect x="542.2" y="767.5" width="1457.6" height="1.3" fill="#a7b4c0"/>
<rect x="542.2" y="816.5" width="1457.6" height="1.3" fill="#a7b4c0"/>
<rect x="542.2" y="865.2" width="1457.6" height="1.3" fill="#a7b4c0"/>
<rect x="542.2" y="913.7" width="1457.6" height="1.3" fill="#a7b4c0"/>
<rect x="577.4" y="768" width="1.2" height="146" fill="#a7b4c0"/>
<rect x="1318.2" y="768" width="1.2" height="146" fill="#a7b4c0"/>
<rect x="1506.0" y="768" width="1.2" height="146" fill="#a7b4c0"/>
<text x="589.3" y="799.8" font-size="19" font-weight="bold" fill="#1d3553" text-anchor="start" textLength="99.8" lengthAdjust="spacingAndGlyphs">Eigenschaft</text>
<text x="1329.8" y="799.8" font-size="19" font-weight="bold" fill="#1d3553" text-anchor="start" textLength="82.3" lengthAdjust="spacingAndGlyphs">Kennwert</text>
<text x="1516.5" y="799.8" font-size="19" font-weight="bold" fill="#1d3553" text-anchor="start" textLength="41.0" lengthAdjust="spacingAndGlyphs">Wert</text>
<text x="589.3" y="848.0" font-size="19" fill="#536a80" text-anchor="start" textLength="359.0" lengthAdjust="spacingAndGlyphs">(+) Elektrizität: Wirkenergie | Σ (22.01.2019)</text>
<text x="589.3" y="896.4" font-size="19" fill="#536a80" text-anchor="start" textLength="386.3" lengthAdjust="spacingAndGlyphs">(+) Elektrizität: Wirkleistung | Max (22.01.2019)</text>
<text x="1329.8" y="848.0" font-size="19" fill="#536a80" text-anchor="start" textLength="61.3" lengthAdjust="spacingAndGlyphs">Summe</text>
<text x="1516.5" y="848.0" font-size="19" fill="#536a80" text-anchor="start" textLength="97.1" lengthAdjust="spacingAndGlyphs">620,23 kWh</text>
<text x="1329.8" y="896.4" font-size="19" fill="#536a80" text-anchor="start" textLength="80.6" lengthAdjust="spacingAndGlyphs">Maximum</text>
<text x="1516.5" y="896.4" font-size="19" fill="#536a80" text-anchor="start" textLength="251.3" lengthAdjust="spacingAndGlyphs">152,00 kW - 22.01.2019, 10:15</text>
</svg></body></html>
